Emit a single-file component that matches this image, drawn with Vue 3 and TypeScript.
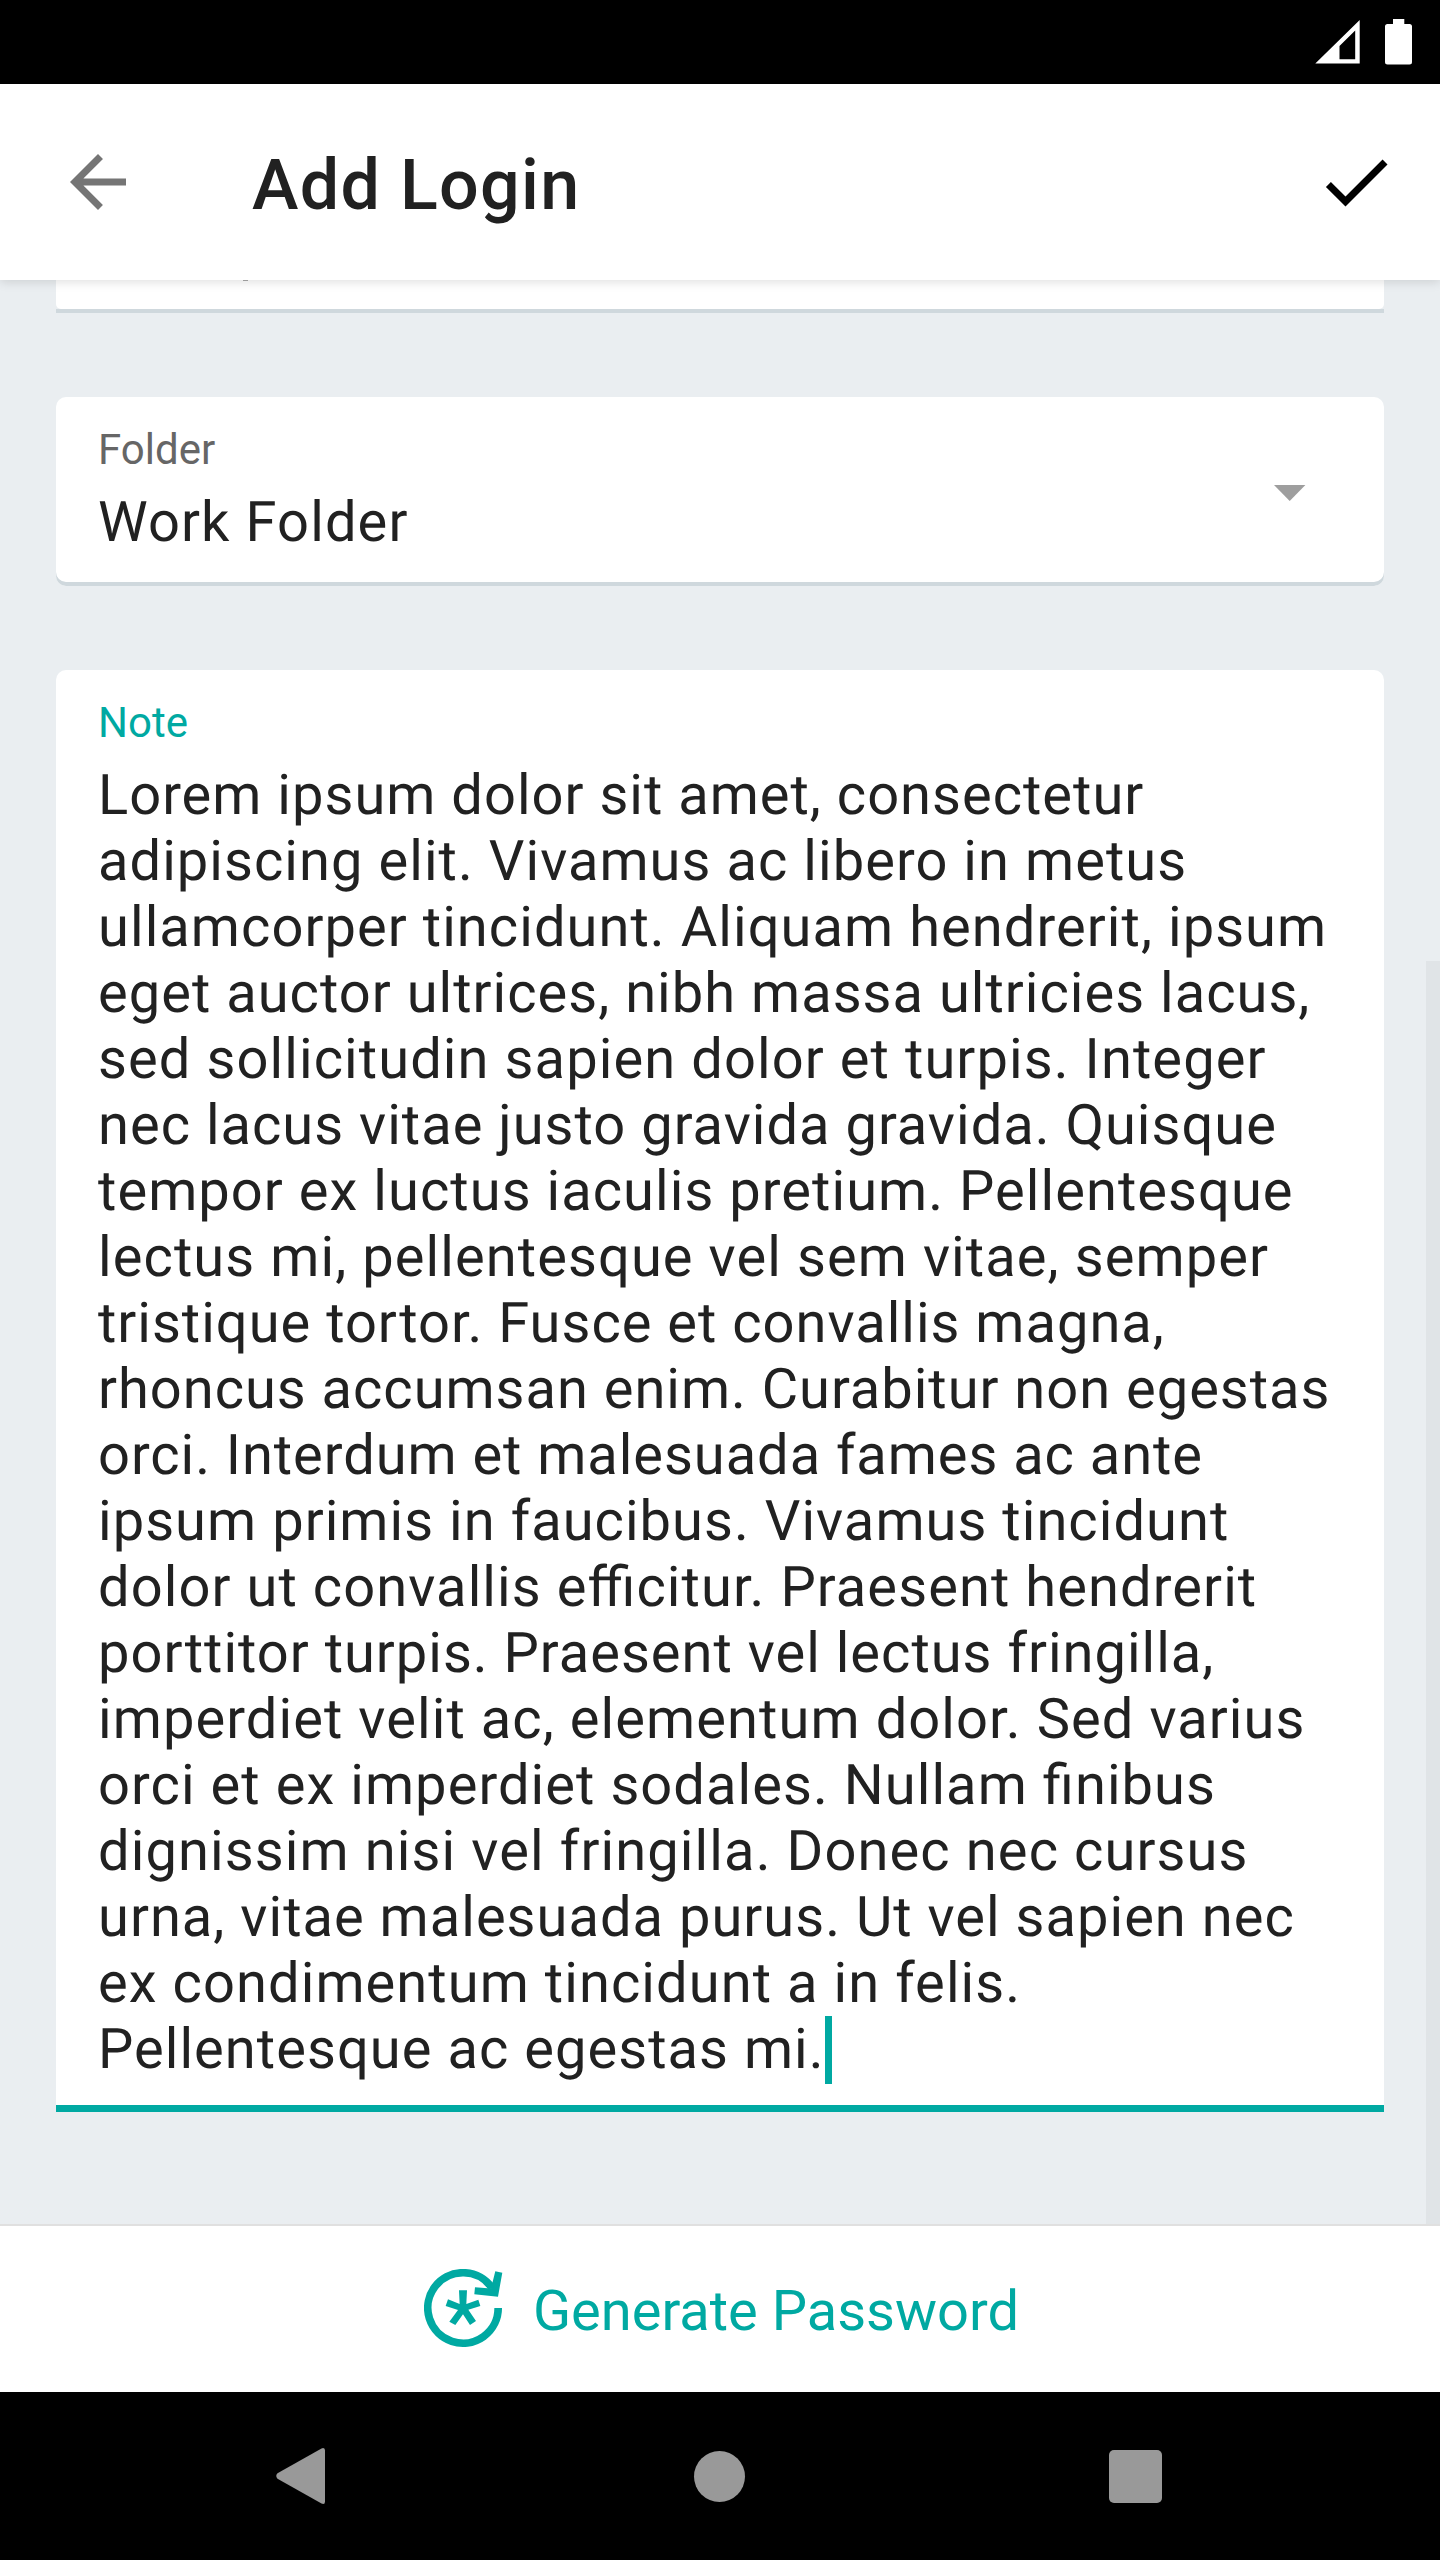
<script setup lang="ts">
interface NoteLine {
  text: string
  tracking: number
}

const folder = 'Work Folder'
const noteLines: NoteLine[] = [
  { text: 'Lorem ipsum dolor sit amet, consectetur', tracking: 1.02 },
  { text: 'adipiscing elit. Vivamus ac libero in metus', tracking: 1.06 },
  { text: 'ullamcorper tincidunt. Aliquam hendrerit, ipsum', tracking: 1.07 },
  { text: 'eget auctor ultrices, nibh massa ultricies lacus,', tracking: 1.03 },
  { text: 'sed sollicitudin sapien dolor et turpis. Integer', tracking: 1.1 },
  { text: 'nec lacus vitae justo gravida gravida. Quisque', tracking: 1.02 },
  { text: 'tempor ex luctus iaculis pretium. Pellentesque', tracking: 1.06 },
  { text: 'lectus mi, pellentesque vel sem vitae, semper', tracking: 1.09 },
  { text: 'tristique tortor. Fusce et convallis magna,', tracking: 1.01 },
  { text: 'rhoncus accumsan enim. Curabitur non egestas', tracking: 0.99 },
  { text: 'orci. Interdum et malesuada fames ac ante', tracking: 0.96 },
  { text: 'ipsum primis in faucibus. Vivamus tincidunt', tracking: 1.05 },
  { text: 'dolor ut convallis efficitur. Praesent hendrerit', tracking: 1.09 },
  { text: 'porttitor turpis. Praesent vel lectus fringilla,', tracking: 1.01 },
  { text: 'imperdiet velit ac, elementum dolor. Sed varius', tracking: 1.09 },
  { text: 'orci et ex imperdiet sodales. Nullam finibus', tracking: 1.07 },
  { text: 'dignissim nisi vel fringilla. Donec nec cursus', tracking: 1.12 },
  { text: 'urna, vitae malesuada purus. Ut vel sapien nec', tracking: 1.03 },
  { text: 'ex condimentum tincidunt a in felis.', tracking: 1.08 },
  { text: 'Pellentesque ac egestas mi.', tracking: 1.05 },
]
</script>

<template>
  <div class="screen">
    <div class="status">
      <svg class="signal" width="45" height="44" viewBox="0 0 45 44">
        <path fill="#fff" fill-rule="evenodd" d="M44.7 0V43.5H0.3ZM40.2 10.5L24.5 26V39.2H40.2Z" />
      </svg>
      <svg width="27" height="46" viewBox="0 0 27 46">
        <path fill="#fff" d="M8 0H19.3V5H24.5Q27 5 27 7.5V43Q27 45.5 24.5 45.5H2.5Q0 45.5 0 43V7.5Q0 5 2.5 5H8Z" />
      </svg>
    </div>
    <header class="appbar">
      <svg width="84" height="84" viewBox="0 0 24 24"><path fill="#757575" d="M20 11H7.83l5.59-5.59L12 4l-8 8 8 8 1.41-1.41L7.83 13H20v-2z" /></svg>
      <h1>Add Login</h1>
      <svg width="84" height="84" viewBox="0 0 24 24"><path d="M9 16.17L4.83 12l-1.42 1.41L9 19 21 7l-1.41-1.41z" /></svg>
    </header>
    <main class="content">
      <div class="clipped"><div class="clipped-body"><i class="descender"></i></div></div>
      <div class="field folder">
        <div>
          <label>Folder</label>
          <div class="value">{{ folder }}</div>
        </div>
        <svg width="32" height="16" viewBox="0 0 32 16"><path fill="#9e9e9e" d="M0 0H31.4L15.7 16Z" /></svg>
      </div>
      <div class="field note">
        <label>Note</label>
        <div class="value">
          <div v-for="(line, i) in noteLines" :key="i" class="line" :style="{ letterSpacing: line.tracking + 'px' }">
            <span>{{ line.text }}</span><i v-if="i === noteLines.length - 1" class="caret"></i>
          </div>
        </div>
      </div>
      <div class="scrollbar"></div>
    </main>
    <footer class="generate">
      <svg width="80" height="80" viewBox="0 0 80 80" fill="#00a9a2">
        <path fill="none" stroke="#00a9a2" stroke-width="7.7" d="M74.2 39A35.2 35.2 0 1 1 68 19" />
        <path d="M71.3 2.3L78.3 3.7L74 27.7L50.3 25.3L51 18.3L67 19.5Z" />
        <path transform="scale(.33333) translate(-27 -27)" d="M132 91H156L154 132L190 119L196 138L160 149L183 183L165 195L144 163L121 195L103 185L129 150L92 138L99 118L134 132Z" />
      </svg>
      <span>Generate Password</span>
    </footer>
    <nav class="nav">
      <svg width="50" height="58" viewBox="0 0 50 58"><path fill="#999" d="M1.5 26.3L45.5 1.4Q49 0 49 3.5V54.5Q49 58 45.5 56.6L1.5 31.7Q-1 29 1.5 26.3Z" /></svg>
      <div class="home"></div>
      <div class="recent"></div>
    </nav>
  </div>
</template>

<style>
body { margin: 0; }
</style>

<style scoped>
.screen { width: 1440px; height: 2560px; display: flex; flex-direction: column; overflow: hidden; background: #eaeef1; font-family: Roboto, sans-serif; color: #212121; }
svg { display: block; flex: none; }
.status { height: 84px; flex: none; box-sizing: border-box; background: #000; display: flex; justify-content: flex-end; gap: 25px; padding: 19px 28px 0 0; }
.signal { margin-top: 1px; }
.appbar { height: 196px; flex: none; box-sizing: border-box; background: #fff; display: flex; align-items: center; padding: 0 42px 0 56px; position: relative; z-index: 1; box-shadow: 0 2px 10px rgba(0, 0, 0, .13); }
h1 { margin: 0 0 0 112px; flex: 1; font-size: 70px; line-height: 82px; font-weight: 500; letter-spacing: 1.3px; padding-top: 6px; }
.content { height: 1944px; flex: none; box-sizing: border-box; padding: 0 56px; position: relative; overflow: hidden; }
.field { box-sizing: border-box; background: #fff; border-radius: 10px; overflow: hidden; }
.clipped { height: 29px; border-bottom: 4px solid #cfd8dd; }
.clipped-body { height: 29px; background: #fff; border-radius: 0 0 5px 5px; }
.descender { display: block; width: 5px; height: 1px; margin-left: 187px; background: #aaa; }
.folder { height: 189px; margin-top: 84px; padding: 28px 78px 0 42px; display: flex; justify-content: space-between; box-shadow: inset 0 -4px #cfd8dd; }
.folder svg { margin-top: 60px; }
label { display: block; font-size: 42px; line-height: 50px; color: #666; }
.value { margin-top: 14px; font-size: 56px; line-height: 66px; letter-spacing: 1.12px; text-rendering: geometricPrecision; font-feature-settings: "liga" 1; white-space: nowrap; }
.note { height: 1442px; margin-top: 84px; padding: 28px 42px 0; border-radius: 10px 10px 0 0; border-bottom: 7px solid #00a9a2; }
.note label { color: #00a9a2; }
.line { height: 66px; display: flex; }
.caret { width: 7px; height: 68px; background: #00a9a2; }
.scrollbar { position: absolute; right: 0; top: 681px; width: 14px; height: 1263px; background: #e0e4e7; }
.generate { height: 168px; flex: none; box-sizing: border-box; border-top: 2px solid #e0e0e0; background: #fff; display: flex; align-items: center; justify-content: center; gap: 29px; padding-left: 3px; color: #00a9a2; font-size: 56px; }
.generate span { padding-top: 4px; }
.nav { height: 168px; flex: none; box-sizing: border-box; background: #000; display: flex; align-items: center; justify-content: space-between; padding: 0 278px 0 276px; }
.home { width: 51px; height: 51px; border-radius: 50%; background: #999; margin-left: 4px; }
.recent { width: 53px; height: 53px; border-radius: 5px; background: #999; }
</style>
